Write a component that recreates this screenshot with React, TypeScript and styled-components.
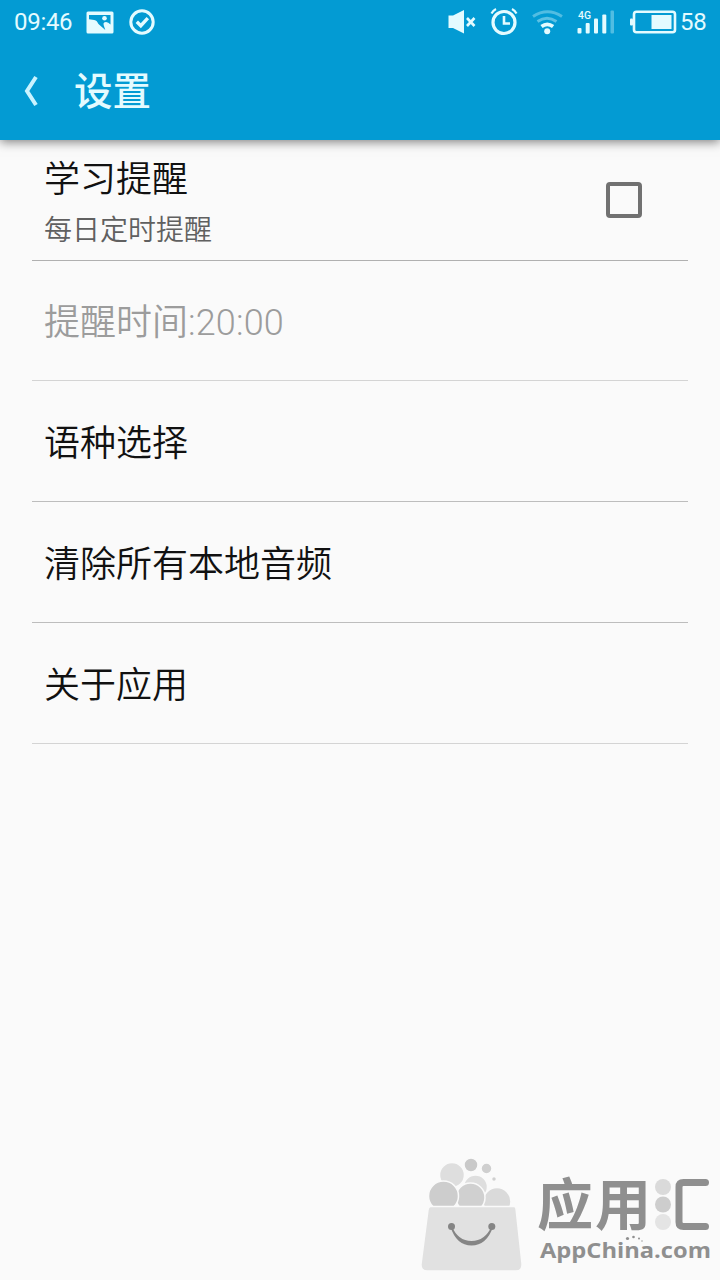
import React from "react";
import styled, { createGlobalStyle } from "styled-components";

const GlobalStyle = createGlobalStyle`
  * { box-sizing: border-box; }
  body {
    margin: 0;
    background: #fafafa;
    font-family: Roboto, "Noto Sans CJK SC", sans-serif;
  }
`;

const Screen = styled.div`
  position: relative;
  width: 720px;
  height: 1280px;
  overflow: hidden;
  background: #fafafa;
`;

const Header = styled.header`
  height: 140px;
  background: #039bd3;
  color: #e4fbff;
  box-shadow: 0 2px 10px rgba(0, 0, 0, 0.5);
`;

const StatusBar = styled.div`
  display: flex;
  align-items: center;
  justify-content: space-between;
  height: 44px;
  padding: 0 13px 0 14px;
`;

const StatusGroup = styled.div`
  display: flex;
  align-items: center;
  height: 44px;
`;

const StatusText = styled.span<{ $width: number }>`
  width: ${(p) => p.$width}px;
  font-size: 24px;
  line-height: 46px;
  letter-spacing: -0.3px;
  white-space: nowrap;
`;

const Notifications = styled.div`
  display: flex;
  align-items: center;
  gap: 15px;
`;

const Icon = styled.svg`
  display: block;
  flex: none;
`;

const TitleBar = styled.div`
  display: flex;
  align-items: center;
  height: 96px;
  padding-left: 20px;
`;

const Title = styled.h1`
  margin: 0 0 0 34px;
  font-size: 38.5px;
  font-weight: 500;
  line-height: 96px;
`;

const List = styled.main`
  padding: 0 32px;
`;

const Row = styled.div<{ $height: number; $line: string }>`
  display: flex;
  align-items: center;
  justify-content: space-between;
  height: ${(p) => p.$height}px;
  padding: 0 46px 0 12px;
  border-bottom: 1px solid ${(p) => p.$line};
`;

const Labels = styled.div`
  display: flex;
  flex-direction: column;
  padding-top: 9px;
`;

const Label = styled.span<{ $disabled?: boolean; $drop?: number }>`
  padding-top: ${(p) => p.$drop ?? 0}px;
  font-family: Roboto, "Noto Sans CJK SC DemiLight", "Noto Sans CJK SC", sans-serif;
  font-size: 36px;
  font-weight: 350;
  line-height: 52px;
  color: ${(p) => (p.$disabled ? "#9c9c9c" : "#111")};
`;

const Digits = styled.span`
  font-weight: 350;
  font-size: 36px;
  letter-spacing: 0.15px;
`;

const Summary = styled.span`
  font-size: 28px;
  font-weight: 350;
  line-height: 50px;
  color: #606060;
`;

const Checkbox = styled.span`
  width: 36px;
  height: 36px;
  border: 4px solid #717171;
  border-radius: 4px;
`;

const Watermark = styled.div`
  position: absolute;
  left: 420px;
  top: 1156px;
  display: flex;
`;

const Brand = styled.div`
  width: 180px;
  margin-left: 16px;
  padding-top: 17px;
`;

const BrandArt = styled.svg`
  display: block;
  overflow: visible;
`;

const PictureIcon = () => (
  <Icon width="28" height="23" viewBox="0 0 28 23">
    <rect x="0.500" y="0.500" width="27" height="22" rx="1.500" fill="#e4fbff" />
    <path d="M3 8.200V4h21.500v9.500q-3-3.500-6-2.200-1.600.8-.8 2.900l1.600 4.800-6.300-5.500c-1.500-1.500-1.500-3-3.300-4-1.900-1-4.200-.9-6.700-1.300z" fill="#039bd3" />
    <circle cx="18.500" cy="7.200" r="2.300" fill="#e4fbff" />
  </Icon>
);

const CheckIcon = () => (
  <Icon width="26" height="26" viewBox="0 0 26 26" fill="none" stroke="#e4fbff">
    <circle cx="13" cy="13" r="11.200" strokeWidth="3" />
    <path d="M7.800 12.700l4 4 7-7.600" strokeWidth="3.400" />
  </Icon>
);

const BackIcon = () => (
  <Icon width="20" height="34" viewBox="0 0 20 34" fill="none" stroke="#c9f3ff">
    <path d="M16 2L7 16l9 14" strokeWidth="4" />
  </Icon>
);

const StatusIcons = () => (
  <Icon width="232" height="44" viewBox="448 0 232 44" fill="none" stroke="#e4fbff">
    <path d="M448.500 15.500h4.500l11-5.500v23.500l-11-5.500h-4.500z" fill="#e4fbff" stroke="none" />
    <path d="M467 18l7.500 8M474.500 18l-7.500 8" strokeWidth="2.600" />
    <circle cx="504" cy="22.500" r="11" strokeWidth="3.200" />
    <path d="M504 16v7.500h6" strokeWidth="2.600" />
    <path d="M491.500 13.500q1.500-3 4.500-4.500M516.500 13.500q-1.500-3-4.500-4.500" strokeWidth="2.200" />
    <path d="M533 16.500q14.500-9.500 29 0" strokeWidth="3" opacity="0.35" />
    <path d="M537.500 21.500q9.500-6.500 19 0" strokeWidth="3" opacity="0.4" />
    <path d="M541.500 26.500q5.800-4.200 11.600 0" strokeWidth="3.800" />
    <circle cx="547.200" cy="31.300" r="3" fill="#e4fbff" stroke="none" />
    <text x="578" y="18.500" fill="#e4fbff" stroke="none" fontFamily="Roboto, sans-serif" fontSize="10.500" fontWeight="500" textLength="13" lengthAdjust="spacingAndGlyphs">4G</text>
    <g fill="#e4fbff" stroke="none">
      <rect x="577.500" y="28" width="4" height="5.500" rx="1" />
      <rect x="585.700" y="23" width="4" height="10.500" rx="1" />
      <rect x="594" y="18.500" width="4" height="15" rx="1" />
      <rect x="602.300" y="14.500" width="4" height="19" rx="1" />
      <rect x="610.500" y="10.500" width="3.500" height="23" rx="1" opacity="0.35" />
      <rect x="630" y="18.500" width="3" height="7" rx="1" />
      <rect x="651.500" y="15" width="20" height="14" />
    </g>
    <rect x="634" y="11.700" width="41" height="20.600" rx="2.500" strokeWidth="2.600" />
  </Icon>
);

const BagLogo = () => (
  <Icon width="102" height="116" viewBox="420 1156 102 116">
    <g stroke="#fafafa" strokeWidth="1.500">
      <circle cx="452" cy="1175" r="12.500" fill="#dedede" />
      <circle cx="475.500" cy="1187" r="12" fill="#dedede" />
      <circle cx="471" cy="1165" r="7" fill="#c9c9c9" />
      <circle cx="486.500" cy="1168.500" r="5.500" fill="#cfcfcf" />
      <circle cx="494" cy="1179" r="2.500" fill="#d0d0d0" />
      <circle cx="497" cy="1201.500" r="14" fill="#dadada" />
      <circle cx="470.500" cy="1197.500" r="14.500" fill="#d0d0d0" />
      <circle cx="443.500" cy="1196" r="15" fill="#cdcdcd" />
      <path d="M430.500 1206.500h83.500q1.500 0 2 2l6 55q.5 7.500-6 7.500h-88.500q-7 0-6.500-7l7-54q.5-3.500 2.500-3.500z" fill="#e1e1e1" />
    </g>
    <g fill="#858585">
      <circle cx="451.500" cy="1226.500" r="3.500" />
      <circle cx="491.800" cy="1226.500" r="3.500" />
      <path d="M450.500 1227q6 18.500 21 18.500t21.500-18.500l-1.500-.5q-6.500 14.500-20 14.500t-19.500-14.500z" />
    </g>
  </Icon>
);

const rows = [
  { label: "语种选择", line: "#bdbdbd" },
  { label: "清除所有本地音频", line: "#bdbdbd" },
  { label: "关于应用", line: "#d4d4d4" },
];

export default function App() {
  return (
    <Screen>
      <GlobalStyle />
      <Header>
        <StatusBar>
          <StatusGroup>
            <StatusText $width={72}>09:46</StatusText>
            <Notifications>
              <PictureIcon />
              <CheckIcon />
            </Notifications>
          </StatusGroup>
          <StatusGroup>
            <StatusIcons />
            <StatusText $width={27}>58</StatusText>
          </StatusGroup>
        </StatusBar>
        <TitleBar>
          <BackIcon />
          <Title>设置</Title>
        </TitleBar>
      </Header>
      <List>
        <Row $height={121} $line="#b0b0b0">
          <Labels>
            <Label>学习提醒</Label>
            <Summary>每日定时提醒</Summary>
          </Labels>
          <Checkbox />
        </Row>
        <Row $height={120} $line="#d4d4d4">
          <Label $disabled $drop={4}>
            提醒时间<Digits>:20:00</Digits>
          </Label>
        </Row>
        {rows.map((row) => (
          <Row key={row.label} $height={121} $line={row.line}>
            <Label $drop={6}>{row.label}</Label>
          </Row>
        ))}
      </List>
      <Watermark>
        <BagLogo />
        <Brand>
          <BrandArt width="180" height="100" viewBox="538 1173 180 100" fill="#8f8f8f">
            <text x="537" y="1225" fontFamily="'Noto Sans CJK SC', sans-serif" fontSize="56" fontWeight="700" textLength="114">应用</text>
            <circle cx="663" cy="1187" r="8" fill="#dadada" />
            <circle cx="663" cy="1204.500" r="8" fill="#cdcdcd" />
            <circle cx="663" cy="1222" r="8" fill="#e4e4e4" />
            <path d="M705.500 1182.500h-22q-4.500 0-4.500 4.500v35q0 4.500 4.500 4.500h22" fill="none" stroke="#8f8f8f" strokeWidth="7" strokeLinecap="round" />
            <text x="540" y="1257.500" fontFamily="'Open Sans', sans-serif" fontSize="21.500" fontWeight="700" textLength="171" lengthAdjust="spacingAndGlyphs">AppChina.com</text>
            <circle cx="627.500" cy="1238.500" r="1.600" />
            <circle cx="633.500" cy="1237" r="1.300" />
            <circle cx="639" cy="1238.500" r="1" />
            <circle cx="642" cy="1241" r="0.700" />
          </BrandArt>
        </Brand>
      </Watermark>
    </Screen>
  );
}
